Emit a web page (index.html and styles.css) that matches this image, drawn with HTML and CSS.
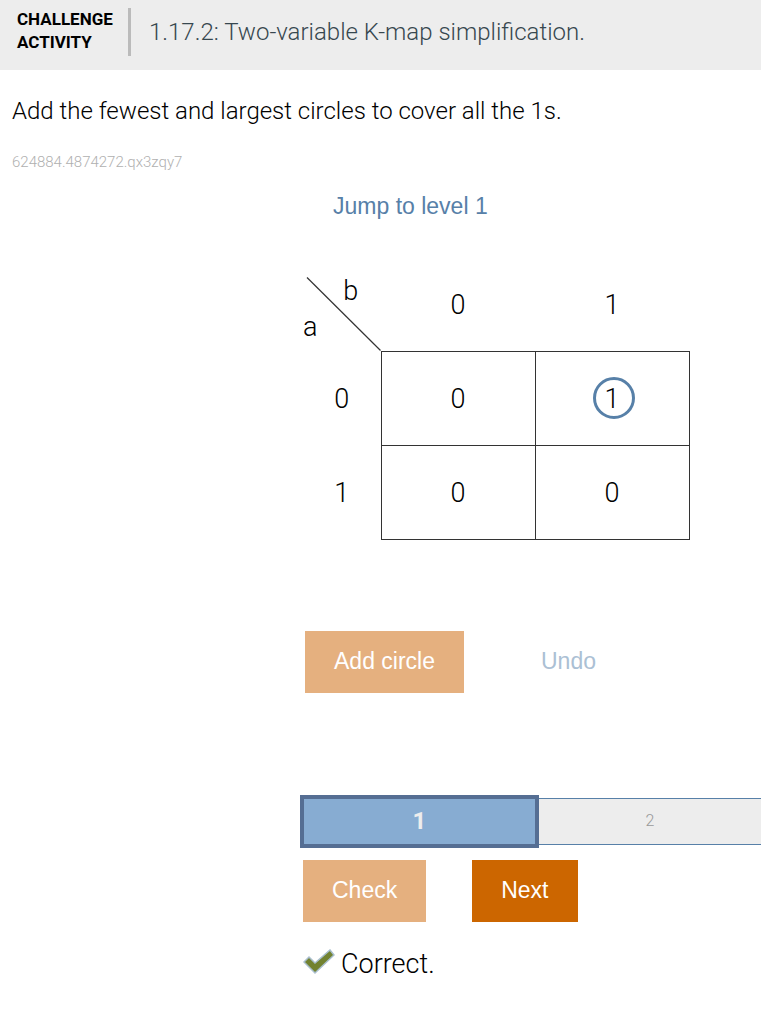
FILE: index.html
```html
<!DOCTYPE html>
<html lang="en">
<head>
<meta charset="utf-8">
<meta name="viewport" content="width=device-width, initial-scale=1">
<title>1.17.2: Two-variable K-map simplification.</title>
<link rel="stylesheet" href="styles.css">
</head>
<body>
<header class="activity-header">
  <div class="activity-type">CHALLENGE ACTIVITY</div>
  <h1 class="activity-title">1.17.2: Two-variable K-map simplification.</h1>
</header>
<main class="activity-body">
  <p class="instructions">Add the fewest and largest circles to cover all the 1s.</p>
  <p class="activity-id">624884.4874272.qx3zqy7</p>
  <section class="tool">
    <a class="jump-link" href="#level-1">Jump to level 1</a>
    <table class="kmap">
      <thead>
        <tr>
          <td class="kmap-corner">
            <div class="kmap-variables">
              <svg class="kmap-diagonal" viewBox="0 0 76 74" aria-hidden="true"><path d="M2 0.500 75.500 73.500" fill="none" stroke="#333" stroke-width="1.200"/></svg>
              <span class="variable-b">b</span>
              <span class="variable-a">a</span>
            </div>
          </td>
          <th scope="col">0</th>
          <th scope="col">1</th>
        </tr>
      </thead>
      <tbody>
        <tr>
          <th scope="row">0</th>
          <td>0</td>
          <td><div class="circled">1<svg class="circle" viewBox="0 0 42 42" aria-hidden="true"><circle cx="21" cy="21" r="19.500" fill="none" stroke="#5780a8" stroke-width="3"/></svg></div></td>
        </tr>
        <tr>
          <th scope="row">1</th>
          <td>0</td>
          <td>0</td>
        </tr>
      </tbody>
    </table>
    <div class="circle-actions">
      <button class="button button-muted" type="button">Add circle</button>
      <button class="button button-link" type="button">Undo</button>
    </div>
    <ol class="levels">
      <li class="level level-current" id="level-1">1</li>
      <li class="level">2</li>
    </ol>
    <div class="submit-actions">
      <button class="button button-muted" type="button">Check</button>
      <button class="button button-primary" type="button">Next</button>
    </div>
    <p class="feedback" role="status">
      <svg class="check" viewBox="0 0 32 26" aria-hidden="true"><path d="M1 13 6 8 12 14 27 1 31 6 12 24Z" fill="#728230" stroke="#a9bfce" stroke-width="1.500"/></svg>
      Correct.
    </p>
  </section>
</main>
</body>
</html>
```
FILE: styles.css
```css
* {
  box-sizing: border-box;
}

body {
  margin: 0;
  background: #fff;
  color: #000;
  font-family: Roboto, "Liberation Sans", sans-serif;
  font-weight: 300;
}

h1, p, ol {
  margin: 0;
  padding: 0;
}

.activity-header {
  display: flex;
  align-items: flex-start;
  gap: 18px;
  min-height: 70px;
  padding: 8px 17px;
  background: #ededed;
}

.activity-type {
  width: 114px;
  height: 48px;
  border-right: 3px solid #bbb;
  font-size: 17px;
  font-weight: 700;
  line-height: 23px;
}

.activity-title {
  color: #37474f;
  font-size: 24px;
  font-weight: 300;
  line-height: 48px;
}

.activity-body {
  padding: 24px 0 24px 12px;
}

.instructions {
  font-size: 24px;
  line-height: 34px;
}

.activity-id {
  margin-top: 24px;
  color: #b0b0b0;
  font-size: 15px;
  line-height: 20px;
}

.tool {
  margin-left: 288px;
}

.jump-link {
  display: inline-block;
  margin: 20px 0 0 33px;
  color: #5780a8;
  font-family: "Liberation Sans", sans-serif;
  font-size: 23px;
  font-weight: 400;
  line-height: 28px;
  text-decoration: none;
}

.kmap {
  margin-top: 37px;
  border-collapse: collapse;
  font-size: 27px;
  text-align: center;
}

.kmap th,
.kmap td {
  width: 154px;
  height: 94px;
  padding: 2px 0 0;
  font-weight: 300;
}

.kmap tbody th,
.kmap .kmap-corner {
  width: 81px;
}

.kmap tbody td {
  border: 1px solid #333;
}

.kmap .kmap-corner {
  vertical-align: bottom;
}

.kmap-variables {
  display: grid;
  grid-template-columns: 1fr 1fr;
  position: relative;
  height: 74px;
  line-height: 28px;
  align-content: start;
  row-gap: 8px;
}

.kmap-diagonal {
  position: absolute;
  right: 0;
  bottom: 0;
  width: 76px;
  height: 74px;
}

.variable-a {
  grid-area: 2 / 1;
  padding-right: 20px;
}

.variable-b {
  grid-area: 1 / 2;
  padding-right: 20px;
}

.circled {
  position: relative;
}

.circle {
  position: absolute;
  top: 50%;
  left: 50%;
  width: 42px;
  height: 42px;
  margin: -22px 0 0 -19px;
}

.kmap tbody th {
  padding-left: 3px;
}

.circle-actions,
.submit-actions {
  display: flex;
}

.circle-actions {
  gap: 48px;
  margin: 91px 0 0 5px;
}

.submit-actions {
  gap: 46px;
  margin: 12px 0 0 3px;
}

.button {
  height: 62px;
  padding: 0 29px 2px;
  border: 0;
  color: #fff;
  font-family: "Liberation Sans", sans-serif;
  font-size: 23px;
  line-height: 28px;
}

.button-muted {
  background: #e5b07f;
}

.button-primary {
  background: #cc6600;
}

.button-link {
  background: transparent;
  color: #abc0d4;
}

.levels {
  display: flex;
  align-items: center;
  margin-top: 102px;
  list-style: none;
}

.level {
  flex: 1;
  height: 47px;
  border: solid #5780a8;
  border-width: 1px 0;
  background: #ededed;
  color: #999;
  font-size: 16px;
  line-height: 44px;
  text-align: center;
}

.level-current {
  flex: 0 0 239px;
  height: 53px;
  border: 4px solid #556e93;
  background: #87acd2;
  color: #ededed;
  font-size: 24px;
  font-weight: 700;
}

.feedback {
  display: flex;
  align-items: center;
  gap: 6px;
  margin: 24px 0 0 3px;
  font-size: 27px;
  line-height: 36px;
}

.check {
  width: 32px;
  height: 26px;
  margin-bottom: 4px;
}
```
